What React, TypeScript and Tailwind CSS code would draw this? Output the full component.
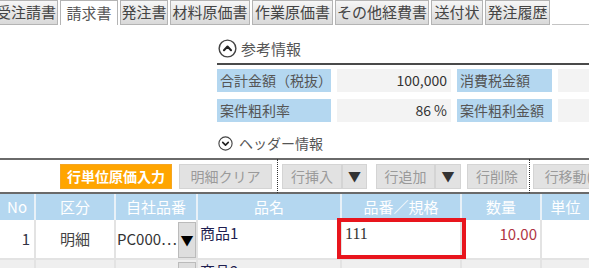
import React from 'react'

const TABS = [
  { label: '受注請書', w: 'w-[64px] -ml-[6px]' },
  { label: '請求書', w: 'w-[58px]', active: true },
  { label: '発注書', w: 'w-[48px]' },
  { label: '材料原価書', w: 'w-[80px]' },
  { label: '作業原価書', w: 'w-[81px]' },
  { label: 'その他経費書', w: 'w-[94px]' },
  { label: '送付状', w: 'w-[52px]' },
  { label: '発注履歴', w: 'w-[65px]' },
]

function CircleChevron({ up, size }: { up?: boolean; size: number }) {
  return (
    <svg width={size} height={size} viewBox="0 0 20 20" className="shrink-0">
      <circle cx="10" cy="10" r="8.8" fill="none" stroke="#444" strokeWidth="1.5" />
      <path
        d={up ? 'M6.3 11.8 L10 8 L13.7 11.8' : 'M6.3 8.5 L10 12.2 L13.7 8.5'}
        fill="none"
        stroke="#222"
        strokeWidth="2.2"
        strokeLinecap="round"
        strokeLinejoin="round"
      />
    </svg>
  )
}

function GrayButton({ label, w }: { label: string; w: string }) {
  return (
    <div className={`${w} h-[25px] flex items-center justify-center bg-[#e2e2e2] border border-[#d4d4d4] text-[14px] text-[#9a9a9a]`}>
      {label}
    </div>
  )
}

function ArrowButton({ w }: { w: string }) {
  return (
    <div className={`${w} h-[25px] flex items-center justify-center bg-[#e2e2e2] border border-[#d4d4d4] text-[13px] text-[#333]`}>
      ▼
    </div>
  )
}

export default function App() {
  return (
    <div className="w-[589px] h-[268px] overflow-hidden bg-white font-['Noto_Sans_CJK_JP','Noto_Sans',sans-serif]">
      {/* Tabs */}
      <div className="flex h-[25px] gap-[2px]">
        {TABS.map(t => (
          <div
            key={t.label}
            className={`${t.w} shrink-0 h-[25px] flex items-center justify-center text-[15px] border border-[#b4b4b4] ${
              t.active
                ? 'bg-white border-b-0 text-[#555]'
                : 'bg-gradient-to-b from-[#f6f6f6] to-[#d9d9d9] text-[#444]'
            }`}
          >
            {t.label}
          </div>
        ))}
        <div className="flex-1 border-b border-[#c4c4c4]" />
      </div>

      {/* Reference info */}
      <div className="pl-[217px]">
        <div className="h-[38px] flex items-end pb-[5px] gap-[4px]">
          <div className="ml-[1px]">
            <CircleChevron up size={19} />
          </div>
          <span className="text-[15px] text-[#555] leading-[19px]">参考情報</span>
        </div>
        <div className="h-[2px] bg-[#4a4a4a]" />
        <div className="mt-[4px] grid grid-cols-[114px_114px_95px_1fr] gap-x-[6px] gap-y-[7px] text-[14px]">
          <div className="h-[23px] bg-[#b4d7f0] text-[#555] pl-[3px] flex items-center">合計金額（税抜）</div>
          <div className="h-[23px] bg-[#f3f3f3] text-[#333] pr-[4px] flex items-center justify-end">100,000</div>
          <div className="h-[23px] bg-[#b4d7f0] text-[#555] pl-[3px] flex items-center">消費税金額</div>
          <div className="h-[23px] bg-[#f3f3f3]" />
          <div className="h-[23px] bg-[#b4d7f0] text-[#555] pl-[3px] flex items-center">案件粗利率</div>
          <div className="h-[23px] bg-[#f3f3f3] text-[#333] pr-[4px] flex items-center justify-end">86 %</div>
          <div className="h-[23px] bg-[#b4d7f0] text-[#555] pl-[3px] flex items-center">案件粗利金額</div>
          <div className="h-[23px] bg-[#f3f3f3]" />
        </div>
        <div className="h-[36px] pt-[6px] flex items-center gap-[6px]">
          <div className="ml-[1px]">
            <CircleChevron size={15} />
          </div>
          <span className="text-[14px] text-[#555]">ヘッダー情報</span>
        </div>
      </div>

      {/* Toolbar */}
      <div className="h-[36px] border-y-2 border-[#6a6a6a] flex items-stretch">
        <div className="flex items-center pl-[60px] gap-[7px]">
          <div className="w-[112px] h-[25px] flex items-center justify-center bg-[#ffa500] border border-[#f5a623] text-[14px] font-bold text-white">
            行単位原価入力
          </div>
          <GrayButton label="明細クリア" w="w-[93px]" />
        </div>
        <div className="ml-[5px] -my-[1px] border-x border-dotted border-[#333] flex items-center pl-[4px] pr-[2px]">
          <GrayButton label="行挿入" w="w-[60px]" />
          <ArrowButton w="w-[25px]" />
          <div className="w-[9px]" />
          <GrayButton label="行追加" w="w-[59px]" />
          <ArrowButton w="w-[26px]" />
          <div className="w-[6px]" />
          <GrayButton label="行削除" w="w-[60px]" />
        </div>
        <div className="flex items-center pl-[3px]">
          <GrayButton label="行移動(" w="w-[70px]" />
        </div>
      </div>

      {/* Table */}
      <div className="grid grid-cols-[34px_78px_80px_142px_118px_78px_1fr] gap-x-[2px] bg-[#e8f1f8]">
        {['No', '区分', '自社品番', '品名', '品番／規格', '数量', '単位'].map(h => (
          <div key={h} className="h-[26px] bg-[#b4d7f0] text-[15px] text-white flex items-center justify-center">
            {h}
          </div>
        ))}
      </div>
      <div className="grid grid-cols-[34px_78px_80px_142px_118px_78px_1fr] gap-x-[2px] bg-[#e3e3e3] text-[15px]">
        <div className="h-[38px] bg-white text-[#334] pr-[4px] flex items-center justify-end">1</div>
        <div className="h-[38px] bg-white text-[#444] flex items-center justify-center">明細</div>
        <div className="h-[38px] bg-white flex">
          <span className="flex-1 pl-[1px] flex items-center text-[#333] whitespace-nowrap overflow-hidden">PC000…</span>
          <div className="w-[18px] mt-[2px] bg-[#dedede] border border-[#bbb] flex items-center justify-center text-[13px] text-black">
            ▼
          </div>
        </div>
        <div className="h-[38px] bg-white pl-[2px] pt-[3px] text-[#1e1e50] leading-[20px]">商品1</div>
        <div className="h-[38px] bg-white relative pl-[3px] pt-[5px] font-['Liberation_Serif',serif] text-[16px] text-[#333] leading-[18px]">
          111
          <div className="absolute left-[-5px] right-[-6px] top-[-2px] bottom-[-1px] border-[4px] border-[#e8151d]" />
        </div>
        <div className="h-[38px] bg-white pr-[3px] pt-[4px] text-right text-[#b03444] leading-[20px]">10.00</div>
        <div className="h-[38px] bg-white" />
      </div>
      <div className="h-[2px] bg-[#e3e3e3]" />
      <div className="grid grid-cols-[34px_78px_80px_142px_118px_78px_1fr] gap-x-[2px] bg-[#e3e3e3] text-[15px]">
        <div className="h-[38px] bg-[#efefef]" />
        <div className="h-[38px] bg-[#efefef]" />
        <div className="h-[38px] bg-[#efefef] flex justify-end">
          <div className="w-[18px] mt-[2px] bg-[#dedede] border border-[#bbb]" />
        </div>
        <div className="h-[38px] bg-[#efefef] pl-[2px] pt-[1px] text-[#1e1e50] leading-[20px]">商品2</div>
        <div className="h-[38px] bg-[#efefef]" />
        <div className="h-[38px] bg-[#efefef]" />
        <div className="h-[38px] bg-[#efefef]" />
      </div>
    </div>
  )
}
